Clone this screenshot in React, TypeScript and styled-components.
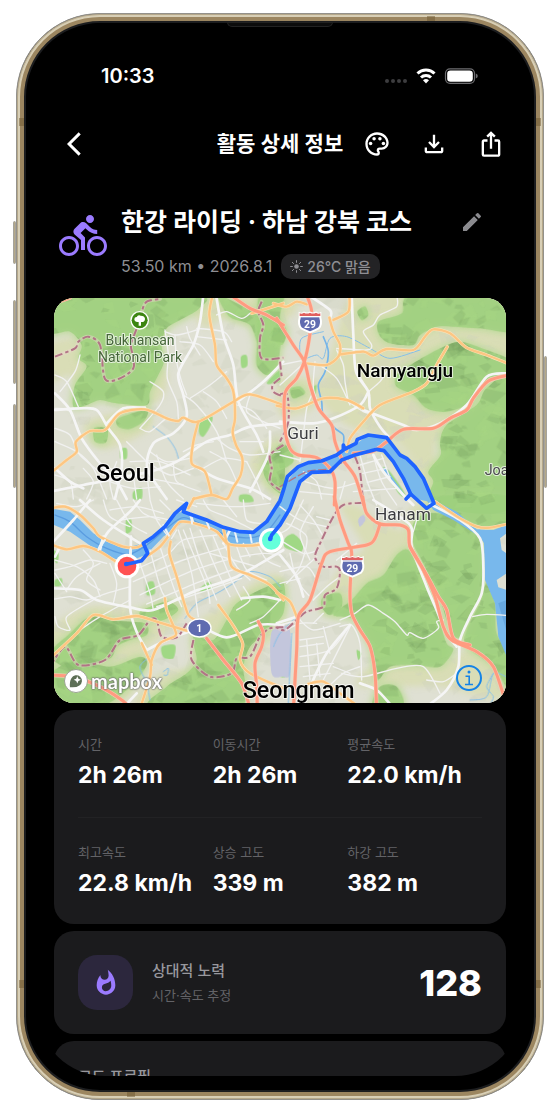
import React from 'react';
import styled, { createGlobalStyle } from 'styled-components';
import {
  MdArrowBackIosNew,
  MdDirectionsBike,
  MdEdit,
  MdIosShare,
  MdOutlineFileDownload,
  MdOutlinePalette,
  MdWhatshot,
} from 'react-icons/md';

const GlobalStyle = createGlobalStyle`
  * { box-sizing: border-box; }
  body {
    margin: 0;
    background: #fff;
    font-family: Inter, 'Noto Sans CJK KR', sans-serif;
    -webkit-font-smoothing: antialiased;
  }
  button { font: inherit; }
  h1, h2, p, dl, dt, dd { margin: 0; }
`;

/* ---------- device frame ---------- */

const Stage = styled.div`
  display: flex;
  height: 100vh;
  padding: 13px 16px;
`;

const Phone = styled.div`
  position: relative;
  display: flex;
  flex: 1;
  min-width: 0;
  padding: 9px 21px 23px;
  border: 1px solid #93918b;
  border-radius: 84px;
  background: #000;
  box-shadow: inset 0 0 0 1px #b5a88a, inset 0 0 0 3px #d8cfb6, inset 0 0 0 7px #9c8660, inset 0 0 0 9px #1c1d1f;
`;

const SideKey = styled.span<{ $side: 'left' | 'right'; $top: number; $length: number }>`
  position: absolute;
  ${(p) => p.$side}: -4px;
  top: ${(p) => p.$top}px;
  width: 3px;
  height: ${(p) => p.$length}px;
  border: 1px solid #a5a39b;
  border-radius: 2px;
  background: #b5a888;
`;

const Antenna = styled.span<{ $edge: 'top' | 'bottom' | 'left' | 'right'; $at: string }>`
  position: absolute;
  ${(p) => p.$edge}: 2px;
  ${(p) => (p.$edge === 'top' || p.$edge === 'bottom' ? 'left' : 'top')}: ${(p) => p.$at};
  width: ${(p) => (p.$edge === 'top' || p.$edge === 'bottom' ? 8 : 5)}px;
  height: ${(p) => (p.$edge === 'top' || p.$edge === 'bottom' ? 5 : 8)}px;
  background: rgba(110, 88, 48, 0.5);
`;

const Speaker = styled.span`
  position: absolute;
  top: 8px;
  left: 50%;
  width: 106px;
  height: 5px;
  margin-left: -53px;
  border: 1px solid #222;
  border-radius: 0 0 6px 6px;
  background: #0c0c0c;
`;

const Screen = styled.main`
  display: flex;
  flex: 1;
  flex-direction: column;
  min-width: 0;
  overflow: hidden;
  border-radius: 67px;
  background: #000;
  color: #fff;
`;

/* ---------- bars ---------- */

const StatusBar = styled.div`
  display: flex;
  flex: none;
  align-items: center;
  justify-content: space-between;
  height: 92px;
  padding: 13px 44px 0 63px;
`;

const Clock = styled.span`
  font-size: 20px;
  font-weight: 600;
  line-height: 24px;
`;

const AppBar = styled.header`
  display: grid;
  flex: none;
  grid-template-columns: 1fr auto 1fr;
  align-items: center;
  height: 57px;
  padding: 0 3px;
`;

const BarTitle = styled.h1`
  font-size: 21px;
  font-weight: 600;
  line-height: 32px;
`;

const Actions = styled.div`
  display: flex;
  justify-content: flex-end;
`;

const IconButton = styled.button<{ $size?: number; $tone?: string }>`
  display: grid;
  flex: none;
  place-items: center;
  width: ${(p) => p.$size ?? 57}px;
  height: ${(p) => p.$size ?? 57}px;
  padding: 0;
  border: 0;
  background: none;
  color: ${(p) => p.$tone ?? '#fff'};
`;

const BackSlot = styled.div`
  padding-left: 4px;
`;

/* ---------- activity heading ---------- */

const Heading = styled.section`
  display: flex;
  flex: none;
  align-items: flex-start;
  gap: 14px;
  padding: 34px 34px 19px 21px;
`;

const SportIcon = styled.span`
  display: flex;
  flex: none;
  padding-top: 6px;
  color: #9b7bff;
`;

const HeadingText = styled.div`
  flex: 1;
  min-width: 0;
`;

const TitleRow = styled.div`
  display: flex;
  align-items: center;
  justify-content: space-between;
  height: 32px;
`;

const ActivityTitle = styled.h2`
  font-size: 25px;
  font-weight: 700;
  line-height: 32px;
  white-space: nowrap;
`;

const Meta = styled.div`
  display: flex;
  align-items: center;
  gap: 9px;
  margin-top: 16px;
  color: #8e8e93;
  font-size: 16px;
  line-height: 25px;
  white-space: nowrap;
`;

const Weather = styled.span`
  display: flex;
  align-items: center;
  gap: 4px;
  padding: 0 9px;
  border-radius: 10px;
  background: #232325;
  font-size: 14px;
  font-weight: 500;
`;

/* ---------- cards ---------- */

const Feed = styled.div`
  display: flex;
  flex: none;
  flex-direction: column;
  gap: 7px;
  padding: 0 16px;
`;

const Card = styled.section`
  padding: 24px;
  border-radius: 20px;
  background: #1b1b1d;
`;

const StatRow = styled.dl`
  display: grid;
  grid-template-columns: repeat(3, 1fr);
  & + & {
    margin-top: 25px;
    padding-top: 24px;
    border-top: 1px solid #222224;
  }
`;

const StatLabel = styled.dt`
  color: #636367;
  font-size: 13px;
  line-height: 20px;
`;

const StatValue = styled.dd`
  margin-top: 4px;
  font-size: 23px;
  font-weight: 700;
  line-height: 34px;
  white-space: nowrap;
`;

const EffortCard = styled(Card)`
  display: flex;
  align-items: center;
  gap: 19px;
`;

const EffortIcon = styled.span`
  display: grid;
  place-items: center;
  width: 55px;
  height: 55px;
  border-radius: 19px;
  background: #2c273d;
  color: #9b7bff;
`;

const EffortText = styled.div`
  flex: 1;
`;

const EffortTitle = styled.h2`
  color: #98989d;
  font-size: 15px;
  font-weight: 500;
  line-height: 24px;
`;

const EffortNote = styled.p`
  color: #636367;
  font-size: 13px;
  line-height: 24px;
`;

const EffortScore = styled.strong`
  font-size: 36px;
  font-weight: 800;
  line-height: 48px;
`;

/* ---------- map ---------- */

const MapFrame = styled.section`
  position: relative;
  height: 405px;
  overflow: hidden;
  border-radius: 20px;
  background: #dfe0d2;
`;

const MapSvg = styled.svg`
  display: block;
  width: 100%;
  height: 100%;
`;

const MapLogo = styled.a`
  position: absolute;
  bottom: 8px;
  left: 10px;
  display: flex;
  align-items: center;
  gap: 3px;
  color: #fff;
  font-family: Lato, sans-serif;
  font-size: 20px;
  font-weight: 700;
  line-height: 28px;
  text-decoration: none;
  text-shadow: 0 0 1px #555, 0 0 2px #666, 0 0 2px #777;
`;

const MapInfo = styled.button`
  position: absolute;
  right: 24px;
  bottom: 12px;
  display: grid;
  place-items: center;
  width: 26px;
  height: 26px;
  padding: 0;
  border: 2px solid #1583e6;
  border-radius: 50%;
  background: none;
  color: #1583e6;
`;

type Pt = [number, number];
type Layer = 'pale' | 'forest' | 'park' | 'water' | 'apron' | 'street' | 'avenue' | 'creek' | 'border' | 'orange' | 'red';

const parse = (s: string): Pt[] => s.trim().split(/\s+/).map((p) => p.split(',').map(Number) as Pt);

/* Smooth path through the points of a polyline or ring. */
const curve = (s: string, closed = false): string => {
  const p = parse(s);
  const n = p.length;
  const at = (i: number): Pt => (closed ? p[(i + n) % n] : p[Math.max(0, Math.min(n - 1, i))]);
  let d = `M${p[0][0]} ${p[0][1]}`;
  for (let i = 0; i < (closed ? n : n - 1); i += 1) {
    const [a, b, c, e] = [at(i - 1), at(i), at(i + 1), at(i + 2)];
    d += `C${b[0] + (c[0] - a[0]) / 7} ${b[1] + (c[1] - a[1]) / 7} ${c[0] - (e[0] - b[0]) / 7} ${c[1] - (e[1] - b[1]) / 7} ${c[0]} ${c[1]}`;
  }
  return closed ? `${d}Z` : d;
};

type Tile = { x: number; y: number } & Partial<Record<Layer, string[]>>;

const tiles: Tile[] = [
  {
    x: 0,
    y: 0,
    pale: ['0,150 90,130 130,200 90,300 60,240 0,260', '280,200 350,230 340,300 300,330 240,340', '420,9 690,9 690,110 600,90 520,70 470,100 430,60', '110,380 280,340 300,400 180,460 120,440', '600,500 690,420 690,600 640,570'],
    forest: [
      '0,0 440,0 448,40 400,70 350,100 335,150 342,200 325,240 300,290 290,330 200,325 150,315 110,330 70,335 75,270 110,215 85,190 95,150 60,110 0,110',
      '505,0 570,30 620,60 632,100 625,150 600,90 545,70 520,40',
      '628,0 700,0 690,60 692,140 680,220 650,240 620,210 622,140',
      '205,370 290,345 282,378 240,402 205,395',
      '132,400 172,402 168,442 135,440',
      '700,450 650,490 640,530 660,570 700,590',
    ],
    park: ['573,185 590,181 592,212 575,218', '452,372 487,365 480,395 460,425 447,412', '212,463 230,460 230,490 211,490', '250,590 275,578 275,612 250,612', '690,225 650,265 690,260', '570,600 600,600 610,620 570,620'],
    street: [
      '15,240 50,260 85,335', '15,400 60,420 90,480 160,540', '15,440 80,470 130,520 170,612', '90,180 75,230 30,290',
      '345,105 355,180 352,250 380,320 385,370', '375,120 380,200 395,260 410,300', '345,110 380,120 440,105', '440,100 520,110 545,140',
      '440,125 530,135', '390,140 450,150 490,200', '410,95 420,130 450,180', '500,60 530,50 575,70 600,55', '420,310 480,270 530,230',
      '400,300 440,330 500,410 530,500', '460,290 500,320 530,370', '560,330 610,350 650,400', '600,300 590,350 640,380 690,400',
      '270,400 300,410 350,370 380,380', '270,400 330,330 340,290 300,260', '500,430 540,460 600,480 690,470', '480,470 530,500 560,560', '460,520 520,490 590,500',
      '590,500 620,560 640,612', '570,440 640,440', '300,470 350,500 420,490', '290,500 360,540 430,520', '240,500 330,500 420,540', '320,480 350,560 400,612',
      '370,500 380,560 450,590', '180,520 230,540 300,550 400,570', '100,520 130,560 110,612', '15,540 60,560 70,612', '250,540 260,612', '290,530 300,612', '180,560 250,580 330,575', '200,500 180,560 190,612', '400,470 440,450 490,440', '15,340 60,350 95,430', '230,440 260,470 290,500',
    ],
    avenue: [
      '15,295 60,345 95,430 150,505 200,560 230,612', '15,345 90,340 140,345 175,400 210,450 215,520 195,612', '170,385 220,340 285,338',
      '460,0 450,80 430,150 385,235 400,300 410,365 370,415 310,445 292,520 350,612', '498,0 520,120 550,210 565,320 620,420 640,470',
      '700,200 640,260 570,315', '700,385 600,395 540,420 470,440 380,500 300,530 100,570 0,590', '15,520 60,560 100,580', '430,510 500,550 600,580 660,612', '660,410 655,480 600,590',
    ],
    creek: ['310,395 350,425 375,460 385,490'],
    border: ['15,185 75,160 85,140 115,125 150,150 165,252 210,250 250,220 248,180 243,150 260,100 275,50 290,20 330,12', '635,20 625,50 640,90 630,130 635,190 700,188', '690,250 668,270 670,290 700,305', '700,450 660,480 665,520 660,560 690,585'],
    orange: [
      '488,0 478,60 495,150 500,210 530,250 550,290 555,370 548,410 558,450 577,490 572,540 548,580 530,612 485,600 430,612',
      '0,535 50,495 80,470 78,440 120,408 165,405 210,355 285,343 350,370 385,378 400,368 445,380 550,320 600,298 700,330', '445,380 430,440 425,505 465,530 485,600', '605,55 700,25',
    ],
    red: ['0,30 60,8', '548,5 600,40 650,60 700,90'],
  },
  {
    x: 690,
    y: 0,
    pale: ['220,0 420,0 700,100 700,420 480,430 470,520 440,540 340,430 220,400 130,330 130,250 170,120', '0,0 60,0 40,60 0,60', '0,250 120,260 100,340 0,360', '280,460 330,440 420,520 480,560 470,612 400,540'],
    forest: [
      '295,80 365,55 390,0 620,0 700,40 700,110 600,100 520,95 470,95 420,120 400,150 330,145 298,120',
      '350,240 400,205 470,165 540,140 620,165 690,195 690,235 625,250 575,320 500,350 440,340 400,300 350,275',
      '480,440 500,390 590,330 620,280 700,250 700,630 455,630 460,560 445,530 482,480',
      '232,50 255,35 265,60 245,75',
      '30,282 60,275 75,295 40,310',
      '0,450 30,460 40,500 0,520',
      '0,80 20,110 5,150 -30,120',
    ],
    park: ['95,280 110,270 105,300', '310,520 330,530 375,595 360,600'],
    street: [
      '350,0 350,35 300,60 280,90 250,110 275,150 260,165 170,160', '170,165 190,210 195,260 205,320', '0,270 60,215 75,200', '0,210 50,200 75,195', '95,300 80,340 70,420 60,500', '105,200 100,280 120,340',
      '205,320 250,350 290,360', '0,480 60,495', '240,480 262,560 290,630', '240,510 310,490', '248,535 320,520', '262,562 330,545', '280,482 305,560 350,630', '305,480 330,550', '220,590 350,580', '70,530 110,560 125,612',
      '75,560 160,580 240,560', '60,590 170,600', '195,560 180,612', '40,150 70,195', '110,205 170,250 210,330', '230,230 265,290 270,340', '320,230 300,260 265,290',
    ],
    avenue: ['85,0 150,45 150,70', '215,0 220,120 228,230 265,290 270,340 300,395 330,430', '250,345 290,360 370,390 410,405 480,385 560,330 620,245 678,235', '0,380 100,385 160,370 240,330 265,290', '280,480 310,530 370,600 400,630'],
    creek: ['80,190 110,180 130,190 150,130 200,125 270,160 330,190 420,165', '60,180 65,130 130,110'],
    border: ['0,200 5,245', '0,298 22,300 25,380 0,440', '225,485 240,530 250,630'],
    orange: [
      '-20,25 20,35 50,20 80,28', '208,0 205,50 160,75', '148,68 160,110 180,150 175,185 140,210 80,205', '180,178 250,170 280,182 320,162 400,165 435,125 460,103 510,115 560,158 620,180 700,212',
      '502,155 470,210 440,265 400,290 300,330 250,380 210,430 200,470', '-10,332 50,340 130,310 200,315 250,340',
    ],
    red: [
      '-10,70 40,150 73,200 90,270 115,340 155,390 165,440 185,490 225,545 252,630', '80,0 95,50 88,130 73,200 50,250 15,295 15,400 30,460 55,480 110,488 150,520 165,560 163,630',
      '690,240 625,258 580,310 560,345 510,370 460,400 370,403 320,440 280,468 220,475',
    ],
  },
  {
    x: 0,
    y: 615,
    pale: ['0,400 120,320 290,330 400,300 380,370 290,450 280,520 200,620 0,620', '430,380 530,310 640,230 700,240 700,400 640,440 600,540 560,620 260,620 330,520 420,500'],
    forest: [
      '0,460 60,400 120,350 200,362 285,370 290,405 240,420 200,440 180,475 100,500 40,500',
      '0,525 80,480 180,500 270,470 290,495 240,560 150,620 0,620',
      '270,335 350,305 385,330 340,360 290,360',
      '430,410 490,420 530,360 560,310 640,265 700,250 700,340 650,395 600,440 580,500 570,620 300,620 350,560 410,520 440,480',
    ],
    park: ['290,250 310,245 315,280 290,285', '450,265 478,245 485,265 455,275', '15,240 35,235 35,255 15,258', '228,60 243,58 245,90 228,100', '335,440 375,435 370,475 340,472', '0,150 25,160 20,190'],
    street: [
      '300,150 330,260 350,300', '330,140 370,260 395,320', '365,115 380,90', '385,90 425,220 445,350', '420,85 450,180 500,300', '450,90 500,210 540,290', '490,110 540,230 575,300', '240,215 350,165 400,120 500,105',
      '250,245 400,180 535,140', '270,285 420,215 545,175', '290,312 450,245 560,205', '320,320 460,275 575,235', '270,190 300,280 310,330', '400,90 470,260 480,310', '520,130 560,200 600,240', '560,140 590,210 650,240',
      '570,170 640,160 690,165', '15,180 80,200 130,240 150,290', '100,150 130,190 110,240 150,270', '15,210 60,200 120,180 170,190', '50,270 80,230 150,190', '0,300 60,290 110,300 170,280 240,260', '15,350 25,380 60,390 50,350 130,300',
      '180,190 200,250 190,310', '240,300 150,350 90,390', '15,220 50,275', '160,0 180,50 240,80', '200,0 240,70 290,100', '250,0 280,40 330,60', '300,0 320,60 355,110', '330,0 360,30', '180,30 260,20 340,40', '210,60 300,50 360,60', '380,0 440,20', '460,0 480,30 530,50 610,90',
      '520,0 560,50', '580,0 590,60 630,70', '440,10 560,20 660,10', '20,10 80,20 130,0', '480,160 620,200', '580,130 600,170', '620,130 650,180 690,200', '580,260 600,300 560,330', '600,370 640,350 690,300',
    ],
    avenue: [
      '0,265 90,270 140,300 240,322 310,330 430,275 560,230 700,150', '243,110 240,320 262,400 290,450', '120,0 70,60 10,125', '160,110 150,150', '145,150 175,95 240,35 270,0', '90,0 160,60 270,130', '440,370 530,412 625,375 700,375',
      '15,170 30,140', '575,295 640,290 690,300', '290,450 350,420 430,390', '230,612 260,580', '540,90 520,130', '420,40 430,70',
    ],
    creek: ['405,355 440,310 500,280 550,250 600,215 660,230 690,260', '300,600 290,550 270,500 300,470', '340,515 355,505 352,525 342,525'],
    border: ['0,500 45,440 85,495 165,480 210,420 265,405 300,360 320,360 335,410 380,412 410,370', '430,420 425,480 480,530 545,520 560,475 600,470 630,410 660,385 700,382'],
    orange: [
      '0,25 45,20 90,45 130,85 150,110 220,140 260,142 285,130', '0,132 50,148 100,138 150,155 205,190', '270,182 330,140 380,75 400,65 450,75 500,95 535,132 600,137 660,128', '432,-5 415,25', '362,125 358,160 380,230 400,300 415,345 435,360',
      '535,135 545,200 600,225 660,255 700,300', '345,295 350,330 375,390 375,408 330,430 305,480 300,530 272,620', '0,475 80,400 130,345 190,358 260,348 320,365 410,392', '275,430 305,495', '505,315 545,370 578,430 570,480 600,520 700,565', '520,85 530,130',
    ],
    red: ['0,525 70,530 150,560 215,600 240,625', '470,415 520,480 575,550 600,625', '625,365 640,400 635,440 615,490 620,560 622,625'],
  },
  {
    x: 690,
    y: 615,
    pale: ['180,20 240,20 300,70 380,100 370,180 200,330 130,340 140,270 200,180 250,140', '370,80 440,0 520,20 440,120 440,240 500,380 440,400', '280,500 500,480 620,420 690,560 640,600 480,560 240,560'],
    forest: [
      '160,345 215,300 260,250 310,225 350,165 385,150 420,220 455,300 480,370 500,430 520,450 480,500 400,495 330,500 290,540 270,440 225,360',
      '400,70 440,40 520,50 600,115 610,200 605,280 570,350 545,410 515,400 480,300 430,190 400,130',
      '460,-10 700,-10 700,70 620,82 560,60 500,20',
      '620,250 645,310 650,400 690,470 700,590 640,500 560,440 560,390 600,310',
      '130,290 180,280 185,320 150,345 125,320',
      '300,560 350,560 370,620 280,620',
    ],
    park: ['15,115 40,102 68,130 62,155 15,142', '230,450 245,460 235,480', '0,510 20,505 20,530 0,530', '-20,480 10,470 10,500'],
    street: [
      '60,15 100,60 130,110', '0,20 60,60 140,80', '0,120 70,160 115,150', '20,70 80,110 60,200 20,250', '0,215 80,200 110,240', '70,0 30,80 0,100', '100,20 60,100 90,180', '30,160 50,240 90,290', '0,250 60,235', '50,225 110,170', '60,360 100,390 180,370', '130,380 150,460',
      '60,440 130,430', '60,470 150,450 200,390', '60,500 160,490', '70,530 150,520', '80,420 90,540', '110,430 120,530', '60,420 130,410', '130,540 210,380', '160,500 210,520', '180,380 215,375 240,430 245,540', '145,560 190,520 240,500', '180,360 225,340 265,315 310,340 345,365 380,405 390,398 430,415 475,385 470,365 490,360', '185,520 250,530 350,505 430,500 480,580', '578,350 620,343 690,347',
      '440,540 490,545 530,520', '150,60 110,50', '170,180 230,130', '100,300 140,260 180,230', '60,360 0,375', '20,390 60,370 110,370', '130,340 100,370', '400,95 410,60',
    ],
    avenue: ['450,12 540,60 600,115 610,200 605,280 570,350 540,420 535,500 500,570 440,620', '280,0 390,75 395,140 440,260 470,330 500,400 530,440', '0,165 50,230 70,290', '-10,370 50,350', '210,375 140,460 90,560', '240,550 290,570 330,612'],
    creek: ['570,600 620,590 640,520 678,530', '640,520 620,560 640,590 630,612', '35,400 30,500 25,610', '-20,440 0,400 50,350'],
    border: ['248,8 190,15 160,50 125,120 105,170 130,200 170,200 180,215 170,265 135,285 130,320 80,335 55,355 15,390 -10,382'],
    apron: ['-25,395 28,385 30,520 8,530 -25,520', '235,58 250,45 256,60 240,80'],
    orange: ['-10,278 30,305 50,350', '465,5 540,55 590,80 630,83 700,68', '85,552 130,545 180,580 225,612'],
    red: [
      '163,-10 180,60 205,130 215,160 210,280 215,340 240,390 270,440 285,520 290,630', '248,-10 260,40 300,72 360,75 385,90 390,140 430,210 465,290 490,380 515,420 590,455 640,500 675,600',
      '300,72 285,115 260,135 150,155 125,190 90,300 55,350 50,450 40,630', '390,140 440,225 475,290 500,330 520,415 570,435',
    ],
  },
];

const riverWest =
  'M0 640 L60 650 L90 675 L130 715 L165 735 L230 758 L280 745 L310 725 L345 695 L375 655 L400 650 L470 675 L520 697 L570 711 L610 712 L650 680 L690 620 L712 560 L745 515 L775 503 L815 498 L860 480 L918 448 L955 420 L1010 428 L1050 480 L1095 515 L1120 550 L1152 623 L1100 612 L1082 597 L1060 550 L1030 500 L1002 467 L980 463 L915 480 L875 495 L840 530 L785 532 L750 560 L728 630 L665 725 L640 737 L600 746 L545 746 L500 707 L440 685 L400 680 L340 725 L290 778 L230 803 L160 780 L110 745 L60 710 L0 685Z';
const lake =
  'M1130 615 L1160 620 L1220 650 L1280 703 L1330 705 L1370 690 L1370 715 L1350 730 L1355 765 L1370 775 L1370 835 L1340 855 L1345 877 L1370 885 L1370 1085 L1345 1025 L1335 925 L1305 855 L1302 745 L1290 725 L1210 675 L1150 645Z';

const routeNorth =
  '228,808 250,803 275,797 293,775 280,745 310,725 345,695 375,655 410,625 400,650 470,675 520,697 570,710 610,712 650,680 690,617 702,580 712,545 745,515 775,503 815,498 860,480 880,465 880,450 885,462 918,445 922,433 955,420 1010,428 1050,480 1070,490 1095,515 1120,550 1152,625 1130,640 1082,597 1068,612';
const routeSouth = '660,733 665,720 690,690 720,640 735,600 750,560 785,532 840,530 875,495 915,480 980,463 1002,467 1030,500 1060,550 1082,597';
const straight = (s: string) => `M${parse(s).map((p) => p.join(' ')).join('L')}`;

/* Deterministic facets that shade the hills. */
const facets = (() => {
  let seed = 11;
  const rnd = () => {
    seed = (seed * 16807) % 2147483647;
    return seed / 2147483647;
  };
  return Array.from({ length: 1300 }, () => {
    const x = rnd() * 1380;
    const y = rnd() * 1230;
    const r = 12 + rnd() * 38;
    const turn = rnd() * 6.28;
    const pts = [0, 1, 2, 3].map((i) => {
      const a = turn + i * 1.57 + rnd();
      const q = r * (0.4 + rnd() * 0.8);
      return `${Math.round(x + Math.cos(a) * q)},${Math.round(y + Math.sin(a) * q * 0.7)}`;
    });
    return { pts: pts.join(' '), dark: rnd() > 0.42 };
  });
})();

const draw = (layer: Layer, closed: boolean, props: React.SVGProps<SVGPathElement>) =>
  tiles.map((t, i) => (
    <g key={`${layer}${i}`} transform={`translate(${t.x} ${t.y})`}>
      {(t[layer] ?? []).map((s, k) => (
        <path key={k} d={curve(s, closed)} {...props} />
      ))}
    </g>
  ));

const line = (color: string, width: number): React.SVGProps<SVGPathElement> => ({
  fill: 'none',
  stroke: color,
  strokeWidth: width,
  strokeLinecap: 'round',
  strokeLinejoin: 'round',
});

const Place = styled.text<{ $size: number; $weight?: number; $color?: string }>`
  fill: ${(p) => p.$color ?? '#000'};
  stroke: rgba(255, 255, 255, 0.7);
  stroke-width: 6px;
  stroke-linejoin: round;
  paint-order: stroke;
  font-family: Roboto, sans-serif;
  font-size: ${(p) => p.$size}px;
  font-weight: ${(p) => p.$weight ?? 400};
  text-anchor: middle;
`;

const ShieldText = styled.text`
  fill: #fff;
  font-family: Roboto, sans-serif;
  font-size: 31px;
  font-weight: 700;
  text-anchor: middle;
`;

const Shield = ({ x, y }: { x: number; y: number }) => (
  <g transform={`translate(${x} ${y})`}>
    <path d="M-31 -27 Q-25 -24 -18 -29 Q-9 -24 0 -29 Q9 -24 18 -29 Q25 -24 31 -27 L31 -14 Q37 6 26 18 Q15 24 0 30 Q-15 24 -26 18 Q-37 6 -31 -14Z" fill="#5f6bb0" stroke="#fff" strokeWidth="6" />
    <path d="M-31 -27 Q-25 -24 -18 -29 Q-9 -24 0 -29 Q9 -24 18 -29 Q25 -24 31 -27 L31 -19 L-31 -19Z" fill="#e0605f" />
    <path d="M-32 -17H32" stroke="#fff" strokeWidth="4" />
    <ShieldText x={0} y={16}>29</ShieldText>
  </g>
);

const RouteMap = () => (
  <MapSvg viewBox="12 9 1356 1215" preserveAspectRatio="xMidYMid slice" role="img" aria-label="Seoul, Guri, Namyangju, Hanam, Seongnam">
    <defs>
      <filter id="soft" x="-10%" y="-10%" width="120%" height="120%">
        <feGaussianBlur stdDeviation="9" />
      </filter>
      <filter id="relief" x="0" y="0" width="100%" height="100%">
        <feGaussianBlur stdDeviation="1.500" />
      </filter>
      <clipPath id="hills">
        {tiles.flatMap((t, i) =>
          (t.forest ?? []).map((s, k) => <path key={`${i}-${k}`} transform={`translate(${t.x} ${t.y})`} d={curve(s, true)} />),
        )}
      </clipPath>
    </defs>
    <rect x="0" y="0" width="1390" height="1240" fill="#dfe0d3" />
    <g filter="url(#soft)">{draw('pale', true, { fill: '#d8dcb0', opacity: 0.85 })}</g>
    {facets.slice(0, 320).map((f, i) => (
      <polygon key={i} points={f.pts} fill="#cfd0c0" opacity={0.35} />
    ))}
    <g filter="url(#soft)">{draw('forest', true, { fill: '#b5d693', stroke: '#c4dca2', strokeWidth: 16 })}</g>
    {draw('forest', true, { fill: '#9ccf7c', opacity: 0.75 })}
    <g clipPath="url(#hills)">
      <g filter="url(#relief)">
        {facets.map((f, i) => (
          <polygon key={i} points={f.pts} fill={f.dark ? '#6d955c' : '#a8d884'} opacity={f.dark ? 0.2 : 0.3} />
        ))}
      </g>
    </g>
    {draw('park', true, { fill: '#a0d885' })}
    {draw('apron', true, { fill: '#c3c6dc' })}
    {draw('creek', false, line('#86bfe8', 3))}
    <path d={curve('820,125 835,170 825,230 805,270 815,320 820,360 855,400 880,420 880,450')} {...line('#75b4e8', 5)} />
    <path d={riverWest} fill="#78b8ec" />
    <path d={lake} fill="#78b8ec" />
    <path d="M1002 520 L1060 600" stroke="#78b8ec" strokeWidth="8" />
    <path d="M1345 925 L1370 915 L1370 1010Z" fill="#5f9fd8" opacity="0.7" />
    <path d={curve('15,660 60,680 110,725 170,760 235,778 290,750 350,700 400,668 460,690 530,720 600,728 650,710 690,660')} {...line('#5a9ce0', 4)} />
    {draw('street', false, line('#f1f1f0', 4))}
    {draw('avenue', false, line('#f5f5f5', 8))}
    {draw('border', false, { ...line('#ead5cf', 11), opacity: 0.45 })}
    {draw('border', false, { ...line('#b27486', 6), strokeDasharray: '24 9 10 9', strokeLinecap: 'butt' })}
    <path d={curve('690,575 770,530 840,520 915,480')} {...line('#b27486', 4)} strokeDasharray="22 10" />
    {draw('orange', false, line('#fbe3bd', 10))}
    {draw('orange', false, line('#fdc682', 7))}
    {draw('red', false, line('#f8cbb8', 12))}
    {draw('red', false, line('#ff9b80', 9))}
    {['145,765 165,735', '238,798 242,760', '340,690 357,722', '424,663 426,685', '470,680 478,700', '555,712 562,740', '600,715 605,742'].map((s) => (
      <path key={s} d={straight(s)} {...line('#eef3f7', 6)} />
    ))}

    <circle cx="231" cy="813" r="37" fill="#fff" />
    <circle cx="231" cy="813" r="28" fill="#ff5252" />
    <circle cx="664" cy="736" r="37" fill="#fff" />
    <circle cx="664" cy="736" r="28" fill="#64ffda" />
    <path d={straight(routeNorth)} {...line('#1f64ff', 11)} />
    <path d={straight(routeSouth)} {...line('#1f64ff', 11)} />
    <circle cx="229" cy="807" r="7" fill="#1f64ff" />
    <circle cx="661" cy="731" r="7" fill="#1f64ff" />

    <circle cx="269" cy="76" r="28" fill="#fff" />
    <circle cx="269" cy="76" r="24" fill="#3b8511" />
    <path d="M266 92V81Q254 83 253 73Q253 66 260 66Q264 58 272 62Q284 62 285 71Q285 82 273 81V92Z" fill="#fff" />
    <Place x={270} y={150} $size={42} $color="#46663a">Bukhansan</Place>
    <Place x={270} y={201} $size={42} $color="#46663a">National Park</Place>
    <Place x={226} y={558} $size={70} $weight={500}>Seoul</Place>
    <Place x={1065} y={247} $size={57} $weight={500}>Namyangju</Place>
    <Place x={759} y={433} $size={52} $color="#3c3c40">Guri</Place>
    <Place x={1059} y={675} $size={52} $color="#3c3c40">Hanam</Place>
    <Place x={1340} y={540} $size={43} $color="#4a4a4e">Joa</Place>
    <Place x={746} y={1208} $size={70} $weight={500}>Seongnam</Place>
    <Shield x={780} y={82} />
    <Shield x={907} y={815} />
    <ellipse cx="448" cy="999" rx="35" ry="27" fill="#5f6bb0" stroke="#fff" strokeWidth="4" />
    <ShieldText x={448} y={1010}>1</ShieldText>
  </MapSvg>
);

const stats = [
  [
    ['시간', '2h 26m'],
    ['이동시간', '2h 26m'],
    ['평균속도', '22.0 km/h'],
  ],
  [
    ['최고속도', '22.8 km/h'],
    ['상승 고도', '339 m'],
    ['하강 고도', '382 m'],
  ],
];

export default function App() {
  return (
    <>
      <GlobalStyle />
      <Stage>
        <Phone>
          <SideKey $side="left" $top={207} $length={43} />
          <SideKey $side="left" $top={286} $length={84} />
          <SideKey $side="left" $top={390} $length={84} />
          <SideKey $side="right" $top={342} $length={132} />
          <Antenna $edge="top" $at="78%" />
          <Antenna $edge="bottom" $at="21%" />
          <Antenna $edge="left" $at="104px" />
          <Antenna $edge="right" $at="104px" />
          <Antenna $edge="left" $at="89%" />
          <Antenna $edge="right" $at="89%" />
          <Screen>
            <StatusBar>
              <Clock>10:33</Clock>
              <svg width="94" height="20" viewBox="0 0 94 20" aria-hidden="true">
                {[3, 9, 15, 21].map((x) => (
                  <circle key={x} cx={x} cy="15" r="2" fill="#3d3d3f" />
                ))}
                <g fill="none" stroke="#fff" strokeWidth="3">
                  <path d="M33.500 7.500a12 12 0 0 1 17 0" />
                  <path d="M37 11.500a7.200 7.200 0 0 1 10 0" />
                </g>
                <path d="M42 17.500l-3-3.200a4.400 4.400 0 0 1 6 0z" fill="#fff" />
                <rect x="61.500" y="2.800" width="29" height="14.500" rx="4.500" fill="none" stroke="#6d6d70" strokeWidth="1.200" />
                <rect x="63.200" y="4.400" width="25.600" height="11.300" rx="3.300" fill="#fff" />
                <path d="M91.800 7.500q2 .6 2 2.500t-2 2.500z" fill="#6d6d70" />
              </svg>
            </StatusBar>

            <AppBar>
              <BackSlot>
                <IconButton type="button" aria-label="뒤로">
                  <MdArrowBackIosNew size={28} />
                </IconButton>
              </BackSlot>
              <BarTitle>활동 상세 정보</BarTitle>
              <Actions>
                <IconButton type="button" aria-label="테마">
                  <MdOutlinePalette size={28} />
                </IconButton>
                <IconButton type="button" aria-label="다운로드">
                  <MdOutlineFileDownload size={28} />
                </IconButton>
                <IconButton type="button" aria-label="공유">
                  <MdIosShare size={28} />
                </IconButton>
              </Actions>
            </AppBar>

            <Heading>
              <SportIcon>
                <MdDirectionsBike size={48} />
              </SportIcon>
              <HeadingText>
                <TitleRow>
                  <ActivityTitle>한강 라이딩 · 하남 강북 코스</ActivityTitle>
                  <IconButton type="button" aria-label="수정" $size={32} $tone="#8a8a8e">
                    <MdEdit size={24} />
                  </IconButton>
                </TitleRow>
                <Meta>
                  <span>53.50 km • 2026.8.1</span>
                  <Weather>
                    <svg width="13" height="13" viewBox="0 0 13 13" stroke="currentColor" strokeLinecap="round" aria-hidden="true">
                      <circle cx="6.500" cy="6.500" r="2.300" fill="currentColor" stroke="none" />
                      <path d="M6.500 .6v1.800M6.500 10.600v1.800M.6 6.500h1.800M10.600 6.500h1.800M2.300 2.300l1.300 1.300M9.400 9.400l1.300 1.300M2.300 10.700l1.300-1.300M9.400 3.600l1.300-1.300" />
                    </svg>
                    26°C 맑음
                  </Weather>
                </Meta>
              </HeadingText>
            </Heading>

            <Feed>
              <MapFrame>
                <RouteMap />
                <MapLogo href="#mapbox">
                  <svg width="24" height="24" viewBox="0 0 24 24" aria-hidden="true">
                    <circle cx="12" cy="12" r="11.500" fill="#fff" stroke="#8b9184" strokeWidth=".8" />
                    <path d="M6 18.200q-.7-5.600 1.400-9a5.600 5.600 0 1 1 8 7.300q-3.300 2.400-9.400 1.700z" fill="#5d6f56" />
                    <path d="M13.300 7.200l1.100 2.500 2.500 1.100-2.500 1.100-1.100 2.500-1.100-2.500-2.500-1.100 2.500-1.100z" fill="#fff" />
                  </svg>
                  mapbox
                </MapLogo>
                <MapInfo type="button" aria-label="정보">
                  <svg width="10" height="16" viewBox="0 0 10 16" fill="none" stroke="currentColor" strokeWidth="1.600" aria-hidden="true">
                    <circle cx="5" cy="2" r="1.500" fill="currentColor" stroke="none" />
                    <path d="M1.500 6.300h3.700v8M1 14.500h8" />
                  </svg>
                </MapInfo>
              </MapFrame>

              <Card>
                {stats.map((row, i) => (
                  <StatRow key={i}>
                    {row.map(([label, value]) => (
                      <div key={label}>
                        <StatLabel>{label}</StatLabel>
                        <StatValue>{value}</StatValue>
                      </div>
                    ))}
                  </StatRow>
                ))}
              </Card>

              <EffortCard>
                <EffortIcon>
                  <MdWhatshot size={28} />
                </EffortIcon>
                <EffortText>
                  <EffortTitle>상대적 노력</EffortTitle>
                  <EffortNote>시간·속도 추정</EffortNote>
                </EffortText>
                <EffortScore>128</EffortScore>
              </EffortCard>

              <Card>
                <EffortTitle>고도 프로필</EffortTitle>
              </Card>
            </Feed>
          </Screen>
          <Speaker />
        </Phone>
      </Stage>
    </>
  );
}
